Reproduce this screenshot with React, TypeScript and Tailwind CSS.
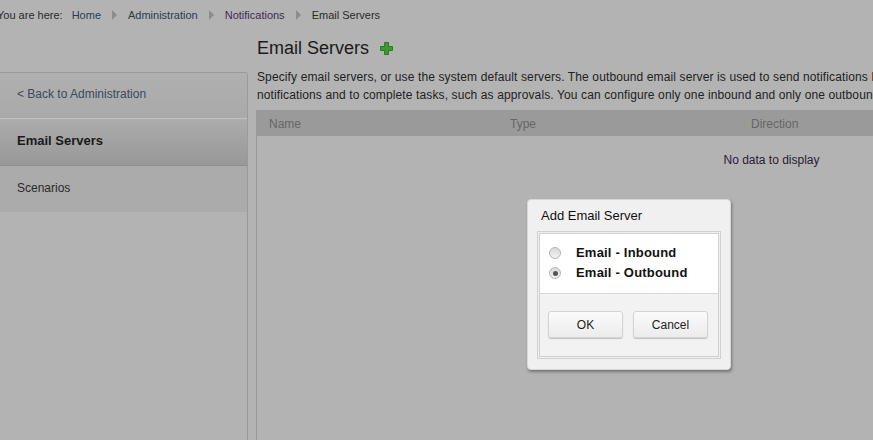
import React from "react";

const font = { fontFamily: '"Liberation Sans", Arial, sans-serif' };

function Sep() {
  return (
    <span className="mx-[11px] inline-block h-0 w-0 border-y-[5px] border-l-[5px] border-y-transparent border-l-[#8c8c8c] align-middle" />
  );
}

function Radio({ checked }: { checked?: boolean }) {
  return (
    <span className="flex h-[12px] w-[12px] items-center justify-center rounded-full border border-[#b5b5b5] bg-gradient-to-b from-[#d8d8d8] to-[#f2f2f2]">
      {checked && <span className="h-[5px] w-[5px] rounded-full bg-[#555]" />}
    </span>
  );
}

export default function App() {
  return (
    <div className="relative h-[440px] w-[873px] overflow-hidden bg-[#b3b3b3] text-[#222]" style={font}>
      {/* breadcrumb */}
      <div className="ml-[-3px] flex h-[30px] items-center text-[11px] text-[#2a2a2a]">
        <span>You are here:</span>
        <span className="ml-[9px] text-[#2d3b4b]">Home</span>
        <Sep />
        <span className="text-[#2d3b4b]">Administration</span>
        <Sep />
        <span className="text-[#3c2d55]">Notifications</span>
        <Sep />
        <span>Email Servers</span>
      </div>

      <div className="flex h-[410px]">
        {/* sidebar */}
        <div className="mt-[42px] flex w-[248px] shrink-0 flex-col rounded-tr-[3px] border-r border-t border-[#9a9a9a] bg-[#b3b3b3]">
          <div className="flex h-[46px] items-center border-b border-[#c2c2c2] bg-gradient-to-b from-[#b0b0b0] to-[#a9a9a9] pb-[3px] pl-[17px] text-[12px] text-[#3b4a5c]">
            &lt; Back to Administration
          </div>
          <div className="flex h-[47px] items-center border-b border-[#8f8f8f] bg-gradient-to-b from-[#acacac] to-[#989898] pb-[2px] pl-[17px] text-[13px] font-bold text-[#1a1a1a]">
            Email Servers
          </div>
          <div className="flex h-[46px] items-center bg-[#ababab] pb-[2px] pl-[17px] text-[12px] text-[#2a2a2a]">
            Scenarios
          </div>
          <div className="flex-1" />
        </div>

        {/* main */}
        <div className="ml-[8px] min-w-0 flex-1 overflow-hidden pt-[6px]">
          <div className="flex h-[24px] items-center text-[18px] leading-[24px] text-[#1a1a1a]">
            <span className="ml-[1px]">Email Servers</span>
            <svg className="ml-[11px]" width="13" height="13" viewBox="0 0 13 13">
              <path d="M4.5 0.5h4v4h4v4h-4v4h-4v-4h-4v-4h4z" fill="#3c9a2c" stroke="#2a7a20" strokeWidth="1" />
            </svg>
          </div>
          <div className="mt-[8px] w-[700px] whitespace-nowrap pl-[1px] text-[12px] leading-[18px] tracking-[0.12px] text-[#222]">
            <div>Specify email servers, or use the system default servers. The outbound email server is used to send notifications by email.</div>
            <div>notifications and to complete tasks, such as approvals. You can configure only one inbound and only one outbound server.</div>
          </div>
          <div className="mt-[6px] h-[400px] w-[1030px] border-l border-[#999]">
            <div className="flex h-[26px] items-center bg-[#9a9a9a] pt-[1px] text-[12px] text-[#666]">
              <span className="w-[253px] pl-[12px]">Name</span>
              <span className="w-[241px]">Type</span>
              <span>Direction</span>
            </div>
            <div className="pt-[16px] text-center text-[12px] leading-[16px] text-[#2a2030]">No data to display</div>
          </div>
        </div>
      </div>

      {/* dialog */}
      <div className="absolute left-[527px] top-[199px] w-[204px] rounded-[4px] border border-[#d8d8d8] bg-[#f0f0f0] px-[9px] pb-[10px] shadow-[1px_2px_3px_rgba(0,0,0,0.35)]">
        <div className="flex h-[31px] items-center pl-[4px] text-[13px] text-[#111]">Add Email Server</div>
        <div className="border-[3px] border-double border-[#d0d0d0]">
          <div className="border-b border-[#d6d6d6] bg-white px-[9px] pb-[10px] pt-[9px]">
            <div className="flex h-[20px] items-center text-[13px] font-bold tracking-[0.2px] text-[#111]">
              <Radio />
              <span className="ml-[15px]">Email - Inbound</span>
            </div>
            <div className="flex h-[20px] items-center text-[13px] font-bold tracking-[0.2px] text-[#111]">
              <Radio checked />
              <span className="ml-[15px]">Email - Outbound</span>
            </div>
          </div>
          <div className="flex gap-[10px] bg-[#f2f2f2] px-[8px] pb-[18px] pt-[17px]">
            <button className="h-[27px] w-[75px] rounded-[3px] border border-[#d4d4d4] bg-gradient-to-b from-[#fafafa] to-[#ececec] text-[12px] text-[#222] shadow-[0_1px_1px_rgba(0,0,0,0.2)]">OK</button>
            <button className="h-[27px] w-[75px] rounded-[3px] border border-[#d4d4d4] bg-gradient-to-b from-[#fafafa] to-[#ececec] text-[12px] text-[#222] shadow-[0_1px_1px_rgba(0,0,0,0.2)]">Cancel</button>
          </div>
        </div>
      </div>
    </div>
  );
}
